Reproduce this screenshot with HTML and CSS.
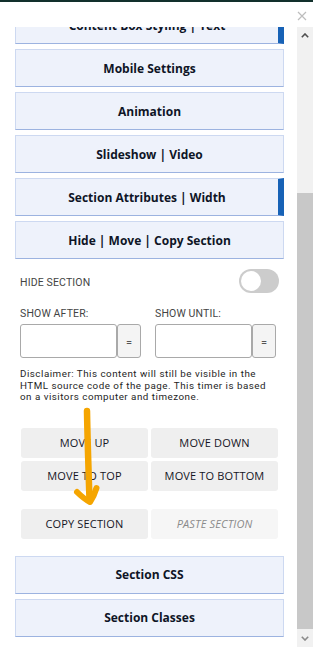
FILE: index.html
```html
<!DOCTYPE html>
<html lang="en">
<head>
<meta charset="utf-8">
<title>Section settings</title>
<link rel="stylesheet" href="styles.css">
</head>
<body>
<div class="window">
  <div class="topline"></div>
  <div class="header">
    <svg class="close" width="10" height="10" viewBox="0 0 10 10"><path d="M1 1 L9 9 M9 1 L1 9" stroke="#bdbdbd" stroke-width="1.2" fill="none"/></svg>
  </div>
  <div class="body">
    <div class="viewport">
      <div class="content">
        <div class="acc acc-active">Content Box Styling | Text</div>
        <div class="acc">Mobile Settings</div>
        <div class="acc">Animation</div>
        <div class="acc">Slideshow | Video</div>
        <div class="acc acc-active">Section Attributes | Width</div>
        <div class="acc">Hide | Move | Copy Section</div>

        <div class="panel">
          <div class="toggle-row">
            <span class="label">HIDE SECTION</span>
            <span class="switch"><span class="knob"></span></span>
          </div>
          <div class="dates">
            <div class="date-group">
              <div class="label date-label">SHOW AFTER:</div>
              <div class="date-field">
                <span class="date-input"></span>
                <span class="date-btn">=</span>
              </div>
            </div>
            <div class="date-group">
              <div class="label date-label">SHOW UNTIL:</div>
              <div class="date-field">
                <span class="date-input"></span>
                <span class="date-btn">=</span>
              </div>
            </div>
          </div>
          <p class="disclaimer">Disclaimer: This content will still be visible in the HTML source code of the page. This timer is based on a visitors computer and timezone.</p>
          <div class="move-grid">
            <div class="mbtn">MOVE UP</div>
            <div class="mbtn">MOVE DOWN</div>
            <div class="mbtn">MOVE TO TOP</div>
            <div class="mbtn">MOVE TO BOTTOM</div>
          </div>
          <div class="move-grid copy-row">
            <div class="mbtn">COPY SECTION</div>
            <div class="mbtn mbtn-disabled">PASTE SECTION</div>
          </div>
        </div>

        <div class="acc">Section CSS</div>
        <div class="acc">Section Classes</div>
      </div>
    </div>
    <div class="scrollbar">
      <div class="sb-arrow">
        <svg width="8" height="5" viewBox="0 0 8 5"><path d="M0.8 4.2 L4 1 L7.2 4.2" stroke="#4f4f4f" stroke-width="1.6" fill="none"/></svg>
      </div>
      <div class="sb-track"></div>
      <div class="sb-thumb"></div>
      <div class="sb-arrow sb-down">
        <svg width="8" height="5" viewBox="0 0 8 5"><path d="M0.8 0.8 L4 4 L7.2 0.8" stroke="#8a8a8a" stroke-width="1.6" fill="none"/></svg>
      </div>
    </div>
  </div>
  <svg class="annot" width="313" height="647" viewBox="0 0 313 647">
    <path d="M87 411 C87.5 440 88.5 470 89.5 500" stroke="#f5a500" stroke-width="6.5" stroke-linecap="round" fill="none"/>
    <path d="M77 492 Q84 499 90 502 Q94 496 96.5 488" stroke="#f5a500" stroke-width="6" stroke-linecap="round" stroke-linejoin="round" fill="none"/>
  </svg>
</div>
</body>
</html>
```
FILE: styles.css
```css
* { box-sizing: border-box; }
html, body { margin: 0; padding: 0; background: #fff; }
body { font-family: "Open Sans", "Noto Sans", sans-serif; }

.window {
  position: relative;
  width: 313px;
  height: 647px;
  overflow: hidden;
  display: flex;
  flex-direction: column;
  background: #fff;
}
.topline { height: 2px; background: #12302c; flex: none; }
.header {
  height: 25px;
  flex: none;
  display: flex;
  justify-content: flex-end;
  padding: 9px 6px 0 0;
}
.close { display: block; }

.body { flex: 1; display: flex; min-height: 0; }
.viewport { flex: 1; overflow: hidden; }
.content { margin-top: -21px; padding: 0 13px 0 15px; }

.acc {
  height: 38px;
  margin-bottom: 5px;
  display: flex;
  align-items: center;
  justify-content: center;
  background: #eef2fb;
  border: 1px solid #cdd9f1;
  border-bottom-color: #9cb3e0;
  font-weight: 700;
  font-size: 12px;
  color: #0e1526;
  white-space: nowrap;
}
.acc-active { border-right: 6px solid #1762b6; }

.panel { padding: 5px 5px 0 5px; }
.toggle-row {
  height: 24px;
  display: flex;
  align-items: center;
  justify-content: space-between;
}
.label {
  font-family: Roboto, "Liberation Sans", sans-serif;
  font-size: 10.5px;
  color: #444;
  letter-spacing: 0.15px;
}
.toggle-row .label { padding-top: 3px; }
.switch {
  width: 40px;
  height: 24px;
  border-radius: 12px;
  background: #cccccc;
  display: flex;
  align-items: center;
  padding-left: 2px;
}
.knob { width: 20px; height: 20px; border-radius: 50%; background: #fff; }

.dates { display: flex; gap: 14px; margin-top: 14px; }
.date-group { width: 121px; }
.date-label { line-height: 14px; height: 14px; }
.date-field { display: flex; margin-top: 3px; height: 34px; }
.date-input {
  width: 97px;
  border: 1px solid #a9a9a9;
  border-radius: 3px;
  background: #fff;
}
.date-btn {
  width: 24px;
  border: 1px solid #a9a9a9;
  border-radius: 3px;
  background: #f4f4f4;
  display: flex;
  align-items: center;
  justify-content: center;
  padding-top: 2px;
  font-family: Roboto, sans-serif;
  font-size: 11px;
  color: #555;
}

.disclaimer {
  margin: 10px 0 0 0;
  font-family: Roboto, "Liberation Sans", sans-serif;
  font-size: 9.8px;
  line-height: 11.5px;
  letter-spacing: 0.5px;
  color: #1e1e1e;
}

.move-grid {
  display: grid;
  grid-template-columns: 127px 127px;
  gap: 3px;
  margin: 25px 1px 0 1px;
}
.copy-row { margin-top: 18px; margin-bottom: 17px; }
.mbtn {
  height: 30px;
  border-radius: 3px;
  background: #efefef;
  display: flex;
  align-items: center;
  justify-content: center;
  font-size: 11px;
  letter-spacing: 0.15px;
  color: #15151f;
  white-space: nowrap;
}
.mbtn-disabled { background: #f6f6f6; color: #8a8a8a; font-style: italic; }

.scrollbar {
  width: 16px;
  flex: none;
  display: flex;
  flex-direction: column;
  background: #f1f1f1;
}
.sb-arrow {
  height: 17px;
  display: flex;
  align-items: center;
  justify-content: center;
}
.sb-down { height: 18px; }
.sb-track { height: 149px; }
.sb-thumb { height: 436px; background: #c8c8c8; }

.annot { position: absolute; left: 0; top: 0; pointer-events: none; }
```
